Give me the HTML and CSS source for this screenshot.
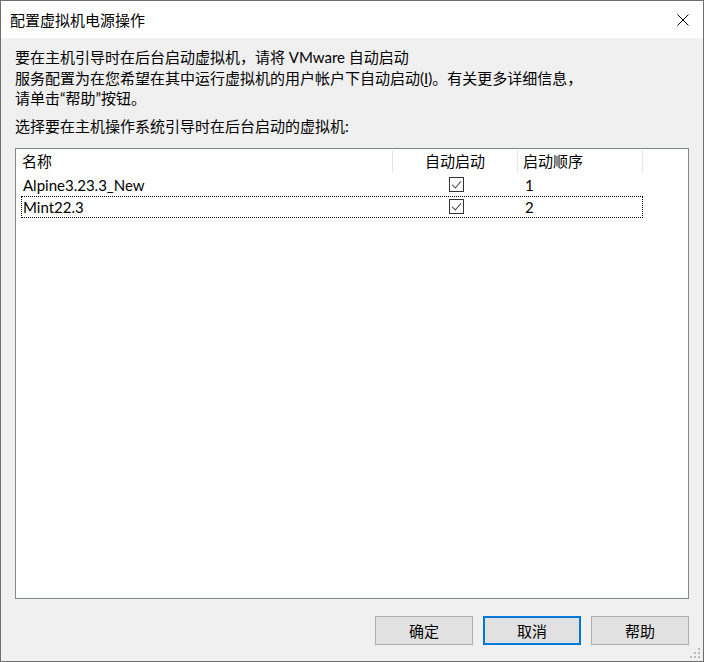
FILE: index.html
```html
<!DOCTYPE html>
<html lang="zh-CN">
<head>
  <meta charset="UTF-8">
  <title>配置虚拟机电源操作</title>
  <link rel="stylesheet" href="styles.css">
</head>
<body>
  <div class="window">
    <div class="titlebar">
      <span class="title">配置虚拟机电源操作</span>
      <button class="close" aria-label="关闭">
        <svg width="12" height="12" viewBox="0 0 12 12">
          <path d="M0.5 0.5 L11.5 11.5 M11.5 0.5 L0.5 11.5" stroke="#000" stroke-width="1" fill="none"/>
        </svg>
      </button>
    </div>

    <div class="content">
      <p class="intro">
        要在主机引导时在后台启动虚拟机，请将 VMware 自动启动<br>
        服务配置为在您希望在其中运行虚拟机的用户帐户下自动启动(<u>I</u>)。有关更多详细信息，<br>
        请单击“帮助”按钮。
      </p>
      <p class="prompt">选择要在主机操作系统引导时在后台启动的虚拟机:</p>

      <div class="listview">
        <div class="list-head">
          <div class="col name">名称</div>
          <div class="col auto">自动启动</div>
          <div class="col order">启动顺序</div>
        </div>
        <div class="list-row">
          <div class="cell name">Alpine3.23.3_New</div>
          <div class="cell auto"><span class="check"></span></div>
          <div class="cell order">1</div>
        </div>
        <div class="list-row focused">
          <div class="cell name">Mint22.3</div>
          <div class="cell auto"><span class="check"></span></div>
          <div class="cell order">2</div>
        </div>
      </div>

      <div class="buttons">
        <button class="btn">确定</button>
        <button class="btn default">取消</button>
        <button class="btn">帮助</button>
      </div>

      <svg class="grip" width="12" height="12" viewBox="0 0 12 12">
        <rect x="9" y="1" width="2" height="2" fill="#bcbcbc"/>
        <rect x="5" y="5" width="2" height="2" fill="#bcbcbc"/>
        <rect x="9" y="5" width="2" height="2" fill="#bcbcbc"/>
        <rect x="1" y="9" width="2" height="2" fill="#bcbcbc"/>
        <rect x="5" y="9" width="2" height="2" fill="#bcbcbc"/>
        <rect x="9" y="9" width="2" height="2" fill="#bcbcbc"/>
      </svg>
    </div>
  </div>
</body>
</html>
```

FILE: styles.css
```css
* {
  box-sizing: border-box;
}

body {
  margin: 0;
  font-family: "Lato", "Noto Sans CJK SC", sans-serif;
  font-size: 15px;
  color: #000;
  background: #f0f0f0;
}

.window {
  width: 704px;
  height: 662px;
  border: 1px solid #6f6f6f;
  display: flex;
  flex-direction: column;
  background: #f0f0f0;
}

.titlebar {
  height: 37px;
  background: #fff;
  display: flex;
  align-items: center;
  justify-content: space-between;
  padding-left: 9px;
}

.title {
  font-size: 15px;
  line-height: 20px;
}

.close {
  width: 36px;
  height: 37px;
  border: none;
  background: none;
  padding: 0;
  display: flex;
  align-items: center;
  justify-content: center;
  margin-right: 2px;
}

.content {
  flex: 1;
  position: relative;
  display: flex;
  flex-direction: column;
  padding: 9px 14px 16px 14px;
}

.intro {
  margin: 0;
  line-height: 20.5px;
}

.intro u {
  text-underline-offset: 2px;
}

.prompt {
  margin: 7px 0 0 0;
  line-height: 21px;
}

.listview {
  flex: 1;
  margin-top: 11px;
  background: #fff;
  border: 1px solid #828790;
}

.list-head {
  display: grid;
  grid-template-columns: 377px 125px 125px;
  height: 25px;
  padding-top: 1px;
}

.list-head .col {
  border-right: 1px solid #e5e5e5;
  line-height: 23px;
  height: 23px;
}

.list-head .name {
  padding-left: 6px;
}

.list-head .auto {
  text-align: center;
}

.list-head .order {
  padding-left: 5px;
}

.list-row {
  display: grid;
  grid-template-columns: 372px 125px 125px;
  width: 622px;
  height: 22px;
  margin-left: 5px;
  border: 1px solid transparent;
}

.list-row.focused {
  border: 1px dotted #000;
}

.list-row .cell {
  line-height: 20px;
}

.list-row .name {
  padding-left: 1px;
}

.list-row .auto {
  display: flex;
  align-items: center;
  justify-content: center;
}

.list-row .order {
  padding-left: 6px;
}

.check {
  width: 15px;
  height: 15px;
  border: 1px solid #333;
  position: relative;
}

.check::after {
  content: "";
  position: absolute;
  left: 4px;
  top: 1px;
  width: 4px;
  height: 8px;
  border-right: 1px solid #444;
  border-bottom: 1px solid #444;
  transform: rotate(40deg);
}

.buttons {
  display: flex;
  justify-content: flex-end;
  gap: 10px;
  margin-top: 17px;
}

.btn {
  width: 98px;
  height: 29px;
  background: #e1e1e1;
  border: 1px solid #adadad;
  font-family: inherit;
  font-size: 15px;
  color: #000;
  padding: 0;
}

.btn.default {
  border: 2px solid #0078d7;
}

.grip {
  position: absolute;
  right: 2px;
  bottom: 2px;
}
```
